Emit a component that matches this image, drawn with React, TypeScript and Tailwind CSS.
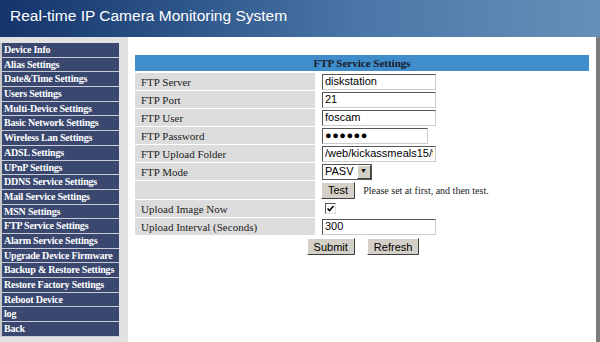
const menu = [
  'Device Info',
  'Alias Settings',
  'Date&Time Settings',
  'Users Settings',
  'Multi-Device Settings',
  'Basic Network Settings',
  'Wireless Lan Settings',
  'ADSL Settings',
  'UPnP Settings',
  'DDNS Service Settings',
  'Mail Service Settings',
  'MSN Settings',
  'FTP Service Settings',
  'Alarm Service Settings',
  'Upgrade Device Firmware',
  'Backup & Restore Settings',
  'Restore Factory Settings',
  'Reboot Device',
  'log',
  'Back',
];

const serif = "font-['Liberation_Serif','Times_New_Roman',serif]";
const sans = "font-['Liberation_Sans',Arial,sans-serif]";

function TextInput({ value, width = 'w-[114px]', type = 'text', extra = '' }: { value: string; width?: string; type?: string; extra?: string }) {
  return (
    <input
      type={type}
      defaultValue={value}
      className={`${width} h-[16px] border border-t-[#555] border-l-[#555] border-r-[#ccc] border-b-[#ccc] bg-white px-[2px] text-[11px] text-black outline-none ${sans} ${extra}`}
    />
  );
}

function Row({ label, children }: { label: string; children?: React.ReactNode }) {
  return (
    <div className="flex h-[18px] border-b border-white">
      <div className={`w-[180px] bg-[#dcdcdc] pl-[6px] text-[11px] leading-[18px] text-[#222] ${serif}`}>{label}</div>
      <div className="flex flex-1 items-center gap-[8px] bg-white pl-[7px]">{children}</div>
    </div>
  );
}

function Btn({ children }: { children: React.ReactNode }) {
  return (
    <button
      className={`h-[17px] border border-t-white border-l-white border-r-[#404040] border-b-[#404040] bg-[#d4d0c8] px-[6px] text-[11px] leading-[14px] text-black ${sans}`}
    >
      {children}
    </button>
  );
}

export default function App() {
  return (
    <div className="flex h-[342px] w-[600px] flex-col overflow-hidden bg-white">
      {/* 标题栏 */}
      <div className="h-[37px] shrink-0 bg-gradient-to-r from-[#14346c] via-[#4a77a8] via-60% to-[#6690b8] pl-[10px] pt-[7px]">
        <span className={`block text-[15.5px] leading-[18px] text-white ${sans}`}>Real-time IP Camera Monitoring System</span>
      </div>

      <div className="flex flex-1">
        {/* 左侧菜单 */}
        <div className="flex w-[128px] shrink-0 bg-[#e2e2e2] pt-[6px]">
          <div className="flex w-[119px] flex-col self-start border-l-2 border-[#c8c8c8]">
            {menu.map((m) => (
              <div
                key={m}
                className={`h-[14.7px] border-b border-[#c9ccd6] bg-[#3a4870] pl-[2px] text-[10px] font-bold leading-[13.5px] tracking-[-0.2px] text-white ${serif}`}
              >
                {m}
              </div>
            ))}
          </div>
        </div>

        {/* 内容区 */}
        <div className="flex-1 bg-white pl-[7px] pr-[7px] pt-[18px]">
          <div className="flex w-[454px] flex-col">
            <div className={`h-[16px] bg-[#3f8ecb] text-center text-[11px] font-bold leading-[16px] text-[#1a1a2a] ${serif}`}>
              FTP Service Settings
            </div>
            <div className="h-[2px]" />
            <Row label="FTP Server">
              <TextInput value="diskstation" />
            </Row>
            <Row label="FTP Port">
              <TextInput value="21" />
            </Row>
            <Row label="FTP User">
              <TextInput value="foscam" />
            </Row>
            <Row label="FTP Password">
              <TextInput value="●●●●●●" width="w-[106px]" extra="text-[9px] tracking-[0.5px]" />
            </Row>
            <Row label="FTP Upload Folder">
              <TextInput value="/web/kickassmeals15/foscam" />
            </Row>
            <Row label="FTP Mode">
              <div className={`flex h-[16px] items-center border border-[#555] bg-white pl-[2px] text-[11px] text-black ${sans}`}>
                PASV
                <span className="ml-[3px] flex h-[14px] w-[14px] items-center justify-center border border-t-white border-l-white border-r-[#404040] border-b-[#404040] bg-[#d4d0c8] text-[7px]">
                  ▼
                </span>
              </div>
            </Row>
            <div className="flex h-[19px] border-b border-white">
              <div className="w-[180px] bg-[#dcdcdc]" />
              <div className="flex flex-1 items-center gap-[8px] bg-white pl-[6px]">
                <Btn>Test</Btn>
                <span className={`text-[10px] text-[#222] ${serif}`}>Please set at first, and then test.</span>
              </div>
            </div>
            <Row label="Upload Image Now">
              <span className="ml-[3px] flex h-[11px] w-[11px] items-center justify-center border border-t-[#555] border-l-[#555] border-r-[#ddd] border-b-[#ddd] bg-white">
                <svg width="9" height="9" viewBox="0 0 9 9">
                  <path d="M1.5 4.5 L3.5 6.5 L7.5 2" stroke="#000" strokeWidth="1.6" fill="none" />
                </svg>
              </span>
            </Row>
            <Row label="Upload Interval (Seconds)">
              <TextInput value="300" />
            </Row>
            <div className="flex justify-center gap-[12px] pl-[2px] pt-[2px]">
              <Btn>Submit</Btn>
              <Btn>Refresh</Btn>
            </div>
          </div>
        </div>

        <div className="w-[4px] shrink-0 bg-[#7c7c7c]" />
      </div>
    </div>
  );
}
